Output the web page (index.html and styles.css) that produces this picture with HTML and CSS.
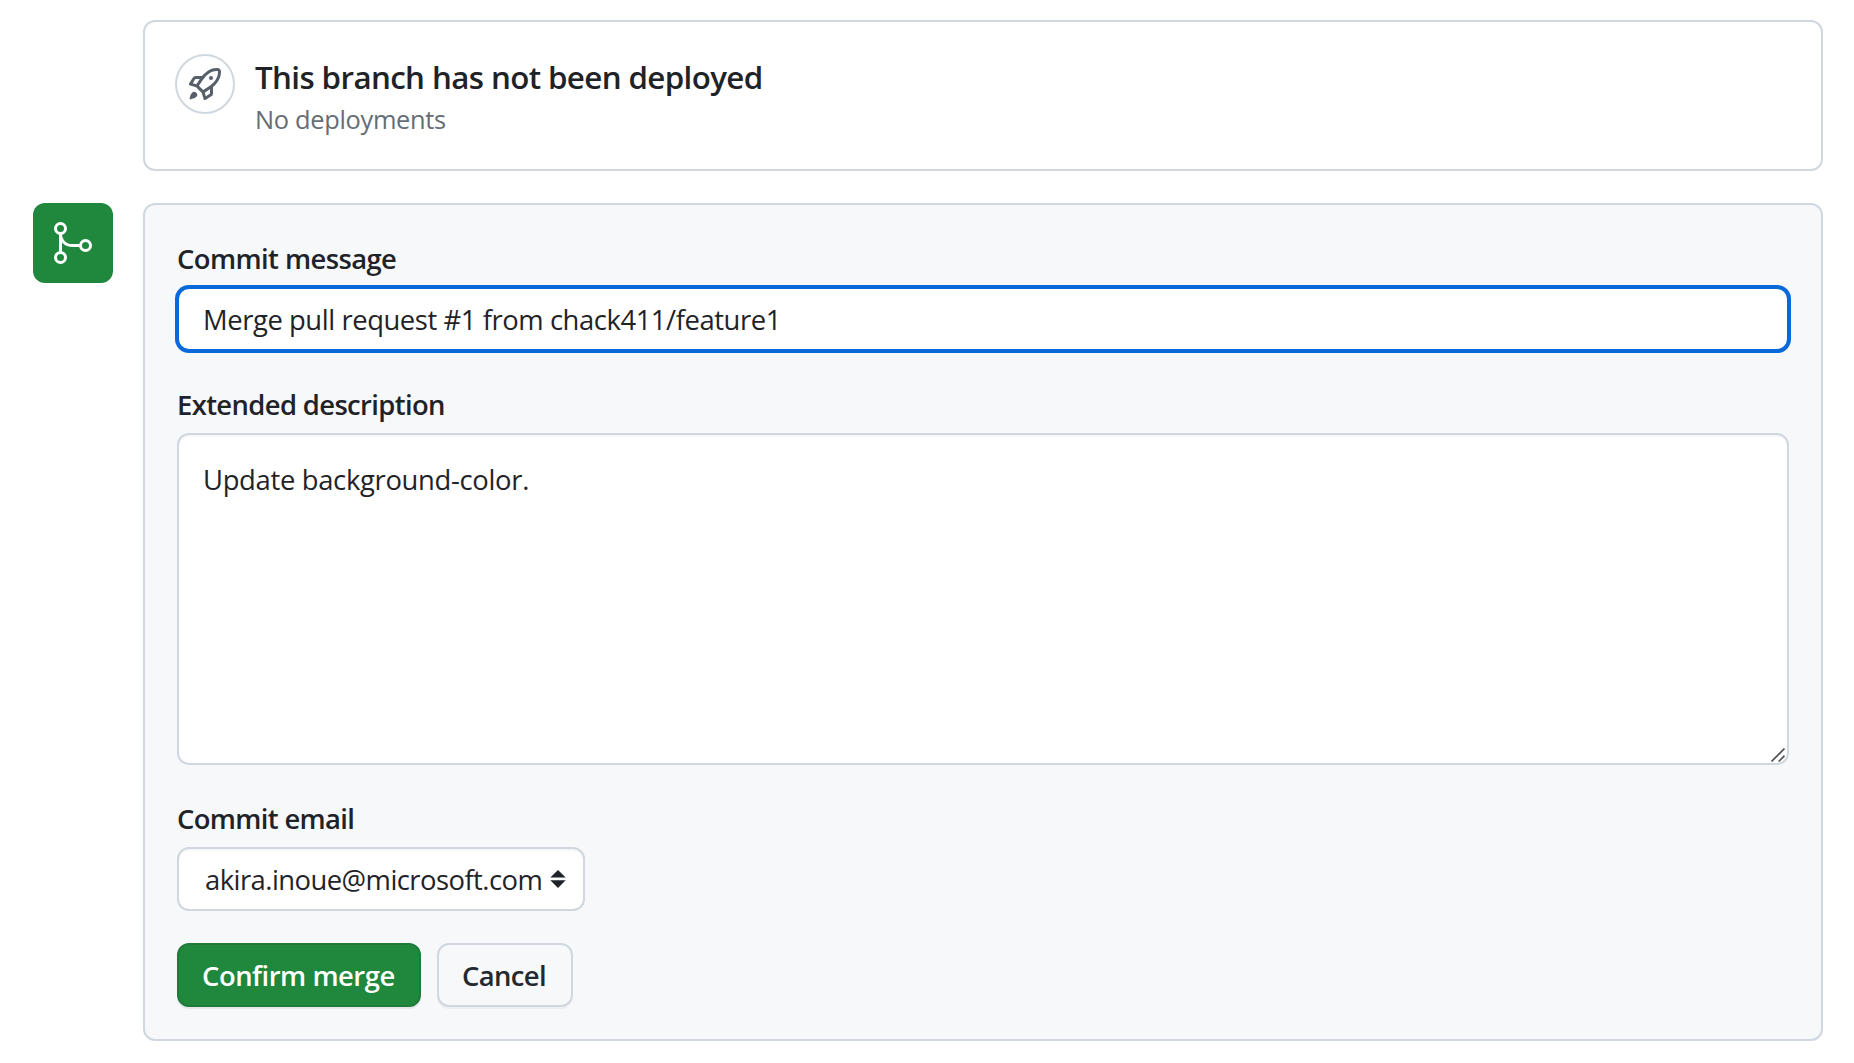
FILE: index.html
```html
<!DOCTYPE html>
<html lang="en">
<head>
<meta charset="utf-8">
<title>Merge pull request</title>
<link rel="stylesheet" href="styles.css">
</head>
<body>
<main class="page">
  <section class="card deploy">
    <span class="deploy-icon">
      <svg width="32" height="32" viewBox="0 0 16 16" fill="currentColor" aria-hidden="true"><path d="M14.064 0h.186C15.216 0 16 .784 16 1.75v.186a8.752 8.752 0 0 1-2.564 6.186l-.458.459c-.314.314-.641.616-.979.904v3.207c0 .608-.315 1.172-.833 1.49l-2.774 1.707a.749.749 0 0 1-1.11-.418l-.954-3.102a1.214 1.214 0 0 1-.145-.125L3.754 9.816a1.218 1.218 0 0 1-.124-.145L.528 8.717a.749.749 0 0 1-.418-1.11l1.71-2.774A1.748 1.748 0 0 1 3.31 4h3.204c.288-.338.59-.665.904-.979l.459-.458A8.749 8.749 0 0 1 14.064 0ZM8.938 3.623h-.002l-.458.458c-.76.76-1.437 1.598-2.02 2.5l-1.5 2.317 2.143 2.143 2.317-1.5c.902-.583 1.74-1.26 2.499-2.02l.459-.458a7.25 7.25 0 0 0 2.123-5.127V1.75a.25.25 0 0 0-.25-.25h-.186a7.249 7.249 0 0 0-5.125 2.123ZM3.56 14.56c-.732.732-2.334 1.045-3.005 1.148a.234.234 0 0 1-.201-.064.234.234 0 0 1-.064-.201c.103-.671.416-2.273 1.15-3.003a1.502 1.502 0 1 1 2.12 2.12Zm6.94-3.935c-.088.06-.177.118-.266.175l-2.35 1.521.548 1.783 1.949-1.2a.25.25 0 0 0 .119-.213ZM3.678 8.116 5.2 5.766c.058-.09.117-.178.176-.266H3.309a.25.25 0 0 0-.213.119l-1.2 1.95ZM12 5a1 1 0 1 1-2 0 1 1 0 0 1 2 0Z"/></svg>
    </span>
    <div class="deploy-text">
      <h2 class="deploy-title">This branch has not been deployed</h2>
      <p class="deploy-note">No deployments</p>
    </div>
  </section>

  <div class="merge-row">
    <span class="merge-badge">
      <svg width="48" height="48" viewBox="0 0 24 24" fill="none" stroke="currentColor" stroke-width="1.5" aria-hidden="true"><circle cx="5.75" cy="4.75" r="2.5"/><circle cx="5.75" cy="19.25" r="2.5"/><circle cx="18.25" cy="13.25" r="2.5"/><path d="M5.75 7.25v9.5M5.75 7.25c0 3.6 2.4 6 6 6h4"/></svg>
    </span>
    <form class="card merge-form">
      <label class="label label-message" for="message">Commit message</label>
      <input class="field input" id="message" type="text" value="Merge pull request #1 from chack411/feature1">
      <label class="label label-description" for="description">Extended description</label>
      <div class="textarea-wrap">
        <textarea class="field textarea" id="description">Update background-color.</textarea>
        <svg class="grip" width="14" height="14" viewBox="0 0 14 14" fill="none" stroke="#555" stroke-width="1.7" aria-hidden="true"><path d="M.5 13.5l13-13M7.7 13.5l5.8-5.8"/></svg>
      </div>
      <label class="label label-email" for="email">Commit email</label>
      <button class="field select" id="email" type="button">
        <span class="select-value">akira.inoue@microsoft.com</span>
        <svg width="16" height="18" viewBox="0 0 16 18" fill="currentColor" aria-hidden="true"><path d="M.3 7.6L8 0l7.7 7.6zM.3 10.3h15.4L8 18z"/></svg>
      </button>
      <div class="actions">
        <button class="btn btn-primary" type="button">Confirm merge</button>
        <button class="btn btn-cancel" type="button">Cancel</button>
      </div>
    </form>
  </div>
</main>
</body>
</html>
```
FILE: styles.css
```css
* {
  box-sizing: border-box;
}

body {
  margin: 0;
  background: #fff;
  color: #1f2328;
  font: 400 27.4px/42px "Open Sans", "Noto Sans", sans-serif;
}

.page {
  display: flex;
  flex-direction: column;
  gap: 32px;
  padding: 20px 31px 22px 33px;
}

.card {
  border: 2px solid #d0d7de;
  border-radius: 12px;
  padding: 32px;
}

.deploy {
  display: flex;
  align-items: flex-start;
  gap: 20px;
  height: 151px;
  margin-left: 110px;
  padding-left: 30px;
}

.deploy-icon {
  display: flex;
  align-items: center;
  justify-content: center;
  width: 60px;
  height: 60px;
  border: 2px solid #d0d7de;
  border-radius: 50%;
  color: #57606a;
}

.deploy-text {
  padding-top: 3px;
}

.deploy-title {
  margin: 0;
  font-size: 31.3px;
  font-weight: 600;
  line-height: 40px;
  letter-spacing: -0.61px;
}

.deploy-note {
  margin: 3px 0 0;
  color: #656d76;
  font-size: 25.4px;
  line-height: 38px;
  letter-spacing: -0.31px;
}

.merge-row {
  display: flex;
  align-items: flex-start;
  gap: 30px;
}

.merge-badge {
  display: flex;
  flex: none;
  align-items: center;
  justify-content: center;
  width: 80px;
  height: 80px;
  border-radius: 12px;
  background: #1f883d;
  color: #fff;
}

.merge-form {
  display: flex;
  flex: 1;
  flex-direction: column;
  align-items: stretch;
  background: #f6f8fa;
}

.label {
  margin-bottom: 6px;
  font-weight: 600;
  line-height: 44px;
}

.label-message {
  letter-spacing: -0.575px;
}

.label-description {
  margin-top: 32px;
  letter-spacing: -0.62px;
}

.label-email {
  margin-top: 32px;
  letter-spacing: -0.645px;
}

.field {
  border: 2px solid #d0d7de;
  border-radius: 12px;
  background: #fff;
  box-shadow: inset 0 2px 0 rgba(208, 215, 222, 0.2);
  color: inherit;
  font: inherit;
}

.input {
  height: 64px;
  padding: 0 24px;
  border-color: #0969da;
  box-shadow: 0 0 0 2px #0969da;
  letter-spacing: -0.425px;
}

.textarea-wrap {
  position: relative;
  display: flex;
  height: 332px;
}

.textarea {
  flex: 1;
  padding: 24px;
  letter-spacing: -0.313px;
  resize: none;
}

.grip {
  position: absolute;
  right: 4px;
  bottom: 3px;
}

.select {
  display: flex;
  align-items: center;
  align-self: flex-start;
  justify-content: space-between;
  width: 408px;
  height: 64px;
  padding: 0 17px 0 26px;
  letter-spacing: -0.54px;
}

.select-value {
  padding-top: 2px;
}

.actions {
  display: flex;
  gap: 16px;
  margin-top: 32px;
}

.btn {
  height: 64px;
  padding: 2px 0 0 23px;
  border: 2px solid;
  border-radius: 12px;
  font: inherit;
  font-weight: 600;
  text-align: left;
}

.btn-primary {
  width: 244px;
  border-color: #1f7b39;
  background: #1f883d;
  box-shadow: 0 2px 1px rgba(31, 35, 40, 0.08);
  color: #fff;
  letter-spacing: -0.465px;
}

.btn-cancel {
  width: 136px;
  border-color: #d0d7de;
  background: #f6f8fa;
  box-shadow: 0 2px 0 rgba(31, 35, 40, 0.04);
  color: #24292f;
  letter-spacing: -0.6px;
}
```
